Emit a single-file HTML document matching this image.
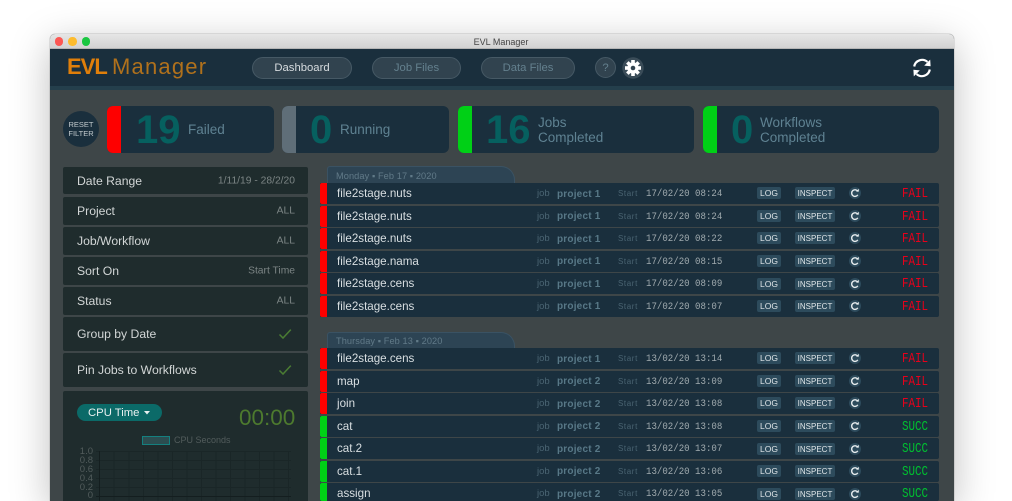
<!DOCTYPE html>
<html><head><meta charset="utf-8"><title>EVL Manager</title>
<style>
html,body{margin:0;padding:0;background:#fff;width:1012px;height:501px;overflow:hidden}
#page{position:relative;width:1012px;height:501px;overflow:hidden;font-family:"Liberation Sans",sans-serif}
#page *{box-sizing:border-box}
.a{position:absolute;white-space:nowrap}
#win{position:absolute;left:49.5px;top:34px;width:904px;height:467px;background:#3e4648;border-radius:5px 5px 0 0;box-shadow:0 10px 40px rgba(0,0,0,.26),0 0 0 .5px rgba(0,0,0,.18)}
#tb{position:absolute;left:49.5px;top:34px;width:904px;height:15px;background:linear-gradient(#e6e6e6,#d2d2d2);border-radius:5px 5px 0 0;border-bottom:1px solid #b5b5b5}
.dot{position:absolute;width:8.5px;height:8.5px;border-radius:50%;top:37.3px}
.nav{position:absolute;top:57px;height:22px;border-radius:11px;background:#31434f;border:1px solid #465965;color:#64808e;font-size:11.3px;line-height:20px;text-align:center}
.card{position:absolute;top:106px;height:47px;background:#1a2f3d;border-radius:6px;overflow:hidden}
.card i{position:absolute;left:0;top:0;width:14px;height:47px}
.num{position:absolute;top:1px;font-size:40px;line-height:46px;font-weight:700;color:#06605f}
.lab{position:absolute;font-size:13.5px;line-height:15px;color:#5f8292;white-space:nowrap}
.f{position:absolute;left:63px;width:245px;background:#1f2c2d;border-radius:2px;color:#d2d6d6}
.f b{font-weight:400;position:absolute;left:14px;top:50%;transform:translateY(-50%);font-size:12.2px;white-space:nowrap}
.f u{text-decoration:none;position:absolute;right:13px;top:50%;transform:translateY(-50%);font-size:10.3px;color:#7c8585;white-space:nowrap}
.tab{position:absolute;left:327px;width:188px;height:18px;background:#2d4454;border:1px solid #3a5263;border-bottom:0;border-radius:3px 14px 0 0;font-size:9.2px;color:#617a88;line-height:18px;padding-left:8px;letter-spacing:.1px}
.r{position:absolute;left:320px;width:619px;height:21px;background:#1a2f3d;border-radius:0 2px 2px 0;color:#d9dfe2;overflow:hidden}
.r i{position:absolute;left:0;top:0;width:7px;height:21px;border-radius:2px 0 0 2px}
.r .n{position:absolute;left:17px;top:4px;font-size:11.6px;line-height:14px;white-space:nowrap}
.r .j{position:absolute;left:217px;top:5px;font-size:9.5px;line-height:12px;color:#4a6472}
.r .p{position:absolute;left:237px;top:4.5px;font-size:10px;line-height:13px;font-weight:700;color:#587887;letter-spacing:.2px}
.r .s{position:absolute;left:298px;top:5px;font-size:8px;line-height:12px;color:#4a6472;letter-spacing:.6px}
.r .d{position:absolute;left:326px;top:5px;font-family:"Liberation Mono",monospace;font-size:10.5px;line-height:13px;color:#a0aaae;white-space:pre;transform:scaleX(.865);transform-origin:0 0}
.r .l,.r .q{position:absolute;top:4.4px;height:12px;background:#2d4b5c;border-radius:2px;color:#dfe5e8;font-size:8.5px;line-height:13px;text-align:center}
.r .l{left:437px;width:24px}
.r .q{left:475px;width:40px;font-size:8px}
.r svg{position:absolute;left:529px;top:4.4px}
.r .t{position:absolute;left:582px;top:3px;font-family:"Liberation Mono",monospace;font-size:14px;line-height:17px;transform:scaleX(.775);transform-origin:0 0}
.fl{color:#e8001b}.su{color:#00c030}
.y{position:absolute;left:76px;width:17px;text-align:right;font-size:9.5px;line-height:10px;color:#525c5c}
</style></head><body><div id="page">
<svg width="0" height="0" style="position:absolute"><symbol id="c" viewBox="0 0 12 12"><circle cx="6" cy="6" r="6" fill="#2d4b5c"/><path d="M8.800 4.400A3.300 3.300 0 1 0 8.800 7.800" stroke="#e8edef" stroke-width="1.400" fill="none"/><path d="M7 4.600H9.800V1.800Z" fill="#e8edef"/></symbol></svg>
<div id="win"></div>
<div id="tb"></div>
<div class="dot" style="left:54.8px;background:#fc5753"></div>
<div class="dot" style="left:68.3px;background:#fdbc2e"></div>
<div class="dot" style="left:81.8px;background:#1ac741"></div>
<div class="a" style="left:401px;width:200px;text-align:center;top:36px;font-size:9px;line-height:12px;color:#454545">EVL Manager</div>

<div class="a" style="left:49.5px;top:49px;width:904px;height:37px;background:#1a2f3d"></div>
<div class="a" style="left:49.5px;top:86px;width:904px;height:4px;background:#243f4c"></div>
<div class="a" style="left:67px;top:53.4px;font-size:22px;line-height:28px;font-weight:700;color:#e07f0a;letter-spacing:-1px">EVL</div>
<div class="a" style="left:112px;top:53.4px;font-size:22px;line-height:28px;color:#b0711c;letter-spacing:1.2px">Manager</div>
<div class="nav" style="left:252px;width:100px;color:#d7dcdf">Dashboard</div>
<div class="nav" style="left:372px;width:89px">Job Files</div>
<div class="nav" style="left:481px;width:94px">Data Files</div>
<div class="nav" style="left:595px;width:21px;height:21px;border-radius:50%">?</div>
<svg class="a" style="left:622px;top:57px" width="22" height="22" viewBox="0 0 22 22">
<circle cx="11" cy="11" r="10.7" fill="#3a4c58"/>
<g fill="#fff"><circle cx="11" cy="11" r="5.700"/>
<rect x="9.200" y="3" width="3.600" height="16"/><rect x="9.200" y="3" width="3.600" height="16" transform="rotate(45 11 11)"/><rect x="9.200" y="3" width="3.600" height="16" transform="rotate(90 11 11)"/><rect x="9.200" y="3" width="3.600" height="16" transform="rotate(135 11 11)"/></g>
<circle cx="11" cy="11" r="2.300" fill="#31434f"/></svg>
<svg class="a" style="left:912px;top:58px" width="20" height="20" viewBox="0 0 20 20" fill="none">
<path d="M2.200 8.500A8 8 0 0 1 15.500 4" stroke="#fff" stroke-width="2.200"/><path d="M12.200 7.600 18.600 8.200 18.200 1.600Z" fill="#fff"/>
<path d="M17.800 11.500A8 8 0 0 1 4.500 16" stroke="#fff" stroke-width="2.200"/><path d="M7.800 12.400 1.400 11.800 1.800 18.400Z" fill="#fff"/></svg>

<div class="a" style="left:63px;top:111px;width:36px;height:36px;border-radius:50%;background:#1a2f3d;color:#c3cbce;font-size:7.500px;line-height:8.500px;text-align:center;padding-top:10px;white-space:normal">RESET<br>FILTER</div>

<div class="card" style="left:107px;width:167px"><i style="background:#fe0000"></i><div class="num" style="left:29px">19</div><div class="lab" style="left:81px;top:16px">Failed</div></div>
<div class="card" style="left:282px;width:167px"><i style="background:#5f6e78"></i><div class="num" style="left:28px">0</div><div class="lab" style="left:58px;top:16px">Running</div></div>
<div class="card" style="left:458px;width:236px"><i style="background:#00d016"></i><div class="num" style="left:28px">16</div><div class="lab" style="left:80px;top:9px">Jobs</div><div class="lab" style="left:80px;top:24px">Completed</div></div>
<div class="card" style="left:703px;width:236px"><i style="background:#00d016"></i><div class="num" style="left:28px">0</div><div class="lab" style="left:57px;top:9px">Workflows</div><div class="lab" style="left:57px;top:24px">Completed</div></div>

<div class="f" style="top:167px;height:27px"><b>Date Range</b><u>1/11/19 - 28/2/20</u></div>
<div class="f" style="top:197px;height:27.5px"><b>Project</b><u>ALL</u></div>
<div class="f" style="top:227px;height:27.5px"><b>Job/Workflow</b><u>ALL</u></div>
<div class="f" style="top:257px;height:28px"><b>Sort On</b><u>Start Time</u></div>
<div class="f" style="top:287px;height:28px"><b>Status</b><u>ALL</u></div>
<div class="f" style="top:317px;height:34px"><b>Group by Date</b>
<svg class="a" style="left:215px;top:11px" width="14" height="12" viewBox="0 0 14 12" fill="none"><path d="M1.500 6.500 5 10 12.800 1.600" stroke="#4a7c33" stroke-width="1.500"/></svg></div>
<div class="f" style="top:353px;height:34px"><b>Pin Jobs to Workflows</b>
<svg class="a" style="left:215px;top:11px" width="14" height="12" viewBox="0 0 14 12" fill="none"><path d="M1.500 6.500 5 10 12.800 1.600" stroke="#4a7c33" stroke-width="1.500"/></svg></div>
<div class="f" style="top:391px;height:110px;border-radius:2px 2px 0 0"></div>

<div class="a" style="left:77px;top:404px;width:85px;height:17px;border-radius:9px;background:#0b6a68;color:#e8f0f0;font-size:11.300px;line-height:18px;padding-left:11px">CPU Time</div>
<svg class="a" style="left:143px;top:411px" width="8" height="4" viewBox="0 0 8 4"><path d="M1 0H7L4 3.500Z" fill="#e8f0f0"/></svg>
<div class="a" style="left:239px;top:404px;font-size:22.500px;line-height:28px;color:#4d7a2e">00:00</div>
<div class="a" style="left:142px;top:436px;width:28px;height:9px;background:#2c4d50;border:1px solid #14807f"></div>
<div class="a" style="left:174px;top:435px;font-size:9px;line-height:11px;color:#525c5c">CPU Seconds</div>
<svg class="a" style="left:96px;top:448px" width="198" height="53" viewBox="0 0 198 53" stroke="#1a2627" stroke-width="1">
<path d="M0 3.500H195M0 12.500H195M0 21.500H195M0 30.500H195M0 39.500H195M3.500 3V53M18 3V53M33 3V53M47.500 3V53M62 3V53M76.500 3V53M91 3V53M105.500 3V53M120 3V53M134.500 3V53M149 3V53M163.500 3V53M178 3V53M192.500 3V53" fill="none"/>
<path d="M0 48.500H195M3.500 3V53" stroke="#141e1f" fill="none"/></svg>
<div class="y" style="top:447px">1.0</div><div class="y" style="top:456px">0.8</div><div class="y" style="top:465px">0.6</div><div class="y" style="top:474px">0.4</div><div class="y" style="top:483px">0.2</div><div class="y" style="top:491px">0</div>

<div class="tab" style="top:166px;height:17px">Monday ▪ Feb 17 ▪ 2020</div>
<div class="r" style="top:183px"><i style="background:#fe0000"></i><span class="n">file2stage.nuts</span><span class="j">job</span><span class="p">project 1</span><span class="s">Start</span><span class="d">17/02/20 08:24</span><span class="l">LOG</span><span class="q">INSPECT</span><svg width="12" height="12"><use href="#c"/></svg><span class="t fl">FAIL</span></div>
<div class="r" style="top:205.500px"><i style="background:#fe0000"></i><span class="n">file2stage.nuts</span><span class="j">job</span><span class="p">project 1</span><span class="s">Start</span><span class="d">17/02/20 08:24</span><span class="l">LOG</span><span class="q">INSPECT</span><svg width="12" height="12"><use href="#c"/></svg><span class="t fl">FAIL</span></div>
<div class="r" style="top:228px"><i style="background:#fe0000"></i><span class="n">file2stage.nuts</span><span class="j">job</span><span class="p">project 1</span><span class="s">Start</span><span class="d">17/02/20 08:22</span><span class="l">LOG</span><span class="q">INSPECT</span><svg width="12" height="12"><use href="#c"/></svg><span class="t fl">FAIL</span></div>
<div class="r" style="top:250.700px"><i style="background:#fe0000"></i><span class="n">file2stage.nama</span><span class="j">job</span><span class="p">project 1</span><span class="s">Start</span><span class="d">17/02/20 08:15</span><span class="l">LOG</span><span class="q">INSPECT</span><svg width="12" height="12"><use href="#c"/></svg><span class="t fl">FAIL</span></div>
<div class="r" style="top:273.200px"><i style="background:#fe0000"></i><span class="n">file2stage.cens</span><span class="j">job</span><span class="p">project 1</span><span class="s">Start</span><span class="d">17/02/20 08:09</span><span class="l">LOG</span><span class="q">INSPECT</span><svg width="12" height="12"><use href="#c"/></svg><span class="t fl">FAIL</span></div>
<div class="r" style="top:295.800px"><i style="background:#fe0000"></i><span class="n">file2stage.cens</span><span class="j">job</span><span class="p">project 1</span><span class="s">Start</span><span class="d">17/02/20 08:07</span><span class="l">LOG</span><span class="q">INSPECT</span><svg width="12" height="12"><use href="#c"/></svg><span class="t fl">FAIL</span></div>

<div class="tab" style="top:332px;height:16px;line-height:17px">Thursday ▪ Feb 13 ▪ 2020</div>
<div class="r" style="top:348px"><i style="background:#fe0000"></i><span class="n">file2stage.cens</span><span class="j">job</span><span class="p">project 1</span><span class="s">Start</span><span class="d">13/02/20 13:14</span><span class="l">LOG</span><span class="q">INSPECT</span><svg width="12" height="12"><use href="#c"/></svg><span class="t fl">FAIL</span></div>
<div class="r" style="top:370.600px"><i style="background:#fe0000"></i><span class="n">map</span><span class="j">job</span><span class="p">project 2</span><span class="s">Start</span><span class="d">13/02/20 13:09</span><span class="l">LOG</span><span class="q">INSPECT</span><svg width="12" height="12"><use href="#c"/></svg><span class="t fl">FAIL</span></div>
<div class="r" style="top:393.100px"><i style="background:#fe0000"></i><span class="n">join</span><span class="j">job</span><span class="p">project 2</span><span class="s">Start</span><span class="d">13/02/20 13:08</span><span class="l">LOG</span><span class="q">INSPECT</span><svg width="12" height="12"><use href="#c"/></svg><span class="t fl">FAIL</span></div>
<div class="r" style="top:415.700px"><i style="background:#00d016"></i><span class="n">cat</span><span class="j">job</span><span class="p">project 2</span><span class="s">Start</span><span class="d">13/02/20 13:08</span><span class="l">LOG</span><span class="q">INSPECT</span><svg width="12" height="12"><use href="#c"/></svg><span class="t su">SUCC</span></div>
<div class="r" style="top:438.200px"><i style="background:#00d016"></i><span class="n">cat.2</span><span class="j">job</span><span class="p">project 2</span><span class="s">Start</span><span class="d">13/02/20 13:07</span><span class="l">LOG</span><span class="q">INSPECT</span><svg width="12" height="12"><use href="#c"/></svg><span class="t su">SUCC</span></div>
<div class="r" style="top:460.800px"><i style="background:#00d016"></i><span class="n">cat.1</span><span class="j">job</span><span class="p">project 2</span><span class="s">Start</span><span class="d">13/02/20 13:06</span><span class="l">LOG</span><span class="q">INSPECT</span><svg width="12" height="12"><use href="#c"/></svg><span class="t su">SUCC</span></div>
<div class="r" style="top:483.400px;height:17.600px"><i style="background:#00d016;height:17.600px"></i><span class="n">assign</span><span class="j">job</span><span class="p">project 2</span><span class="s">Start</span><span class="d">13/02/20 13:05</span><span class="l">LOG</span><span class="q">INSPECT</span><svg width="12" height="12"><use href="#c"/></svg><span class="t su">SUCC</span></div>
</div></body></html>
